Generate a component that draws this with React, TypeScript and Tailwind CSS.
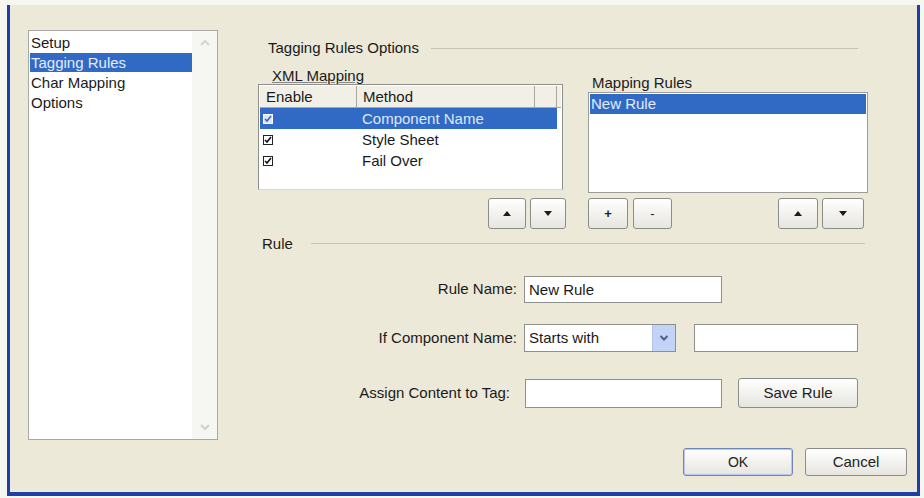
import React from "react";

const font = { fontFamily: '"Liberation Sans", Arial, sans-serif' };

function Btn({ w, h, children, primary }: { w: string; h: string; children: React.ReactNode; primary?: boolean }) {
  return (
    <div
      className={`${w} ${h} flex items-center justify-center rounded-[3px] border ${
        primary ? "border-[#6f86b8] shadow-[inset_0_0_0_1px_#b9c9ee]" : "border-[#8c8c88]"
      } bg-gradient-to-b from-white to-[#e6e5df] text-[#222]`}
    >
      {children}
    </div>
  );
}

function Up() {
  return <div className="w-0 h-0 border-l-[4px] border-r-[4px] border-b-[5px] border-l-transparent border-r-transparent border-b-[#1c1c1c]" />;
}
function Down() {
  return <div className="w-0 h-0 border-l-[4px] border-r-[4px] border-t-[5px] border-l-transparent border-r-transparent border-t-[#1c1c1c]" />;
}

function Check({ sel }: { sel?: boolean }) {
  return (
    <div className={`w-[10px] h-[10px] border ${sel ? "border-white bg-[#dfe7f7]" : "border-[#222] bg-white"} flex items-center justify-center`}>
      <svg width="8" height="8" viewBox="0 0 8 8">
        <path d="M1 4 L3 6 L7 1" stroke={sel ? "#316ac5" : "#111"} strokeWidth="1.6" fill="none" />
      </svg>
    </div>
  );
}

export default function App() {
  const rows = [
    { name: "Component Name", sel: true },
    { name: "Style Sheet" },
    { name: "Fail Over" },
  ];
  return (
    <div className="w-[924px] h-[498px] bg-[#f7f7f2] overflow-hidden text-[15px] text-[#1a1a1a]" style={font}>
      <div className="ml-[7px] mt-[5px] w-[913px] bg-[#ece9d8] border-l-[3px] border-r-[3px] border-b-[4px] border-[#1f3fa8]">
        <div className="flex items-start">
          {/* left nav list */}
          <div className="ml-[18px] mt-[25px] w-[190px] h-[410px] bg-white border border-[#a9a9a4] flex">
            <div className="flex-1 pt-[2px] pl-[1px]">
              <div className="h-[20px] leading-[20px] pl-[1px]">Setup</div>
              <div className="h-[19px] leading-[19px] pl-[1px] bg-[#316ac5] text-[#e4ecfa]">Tagging Rules</div>
              <div className="h-[21px] leading-[21px] pl-[1px]">Char Mapping</div>
              <div className="h-[20px] leading-[20px] pl-[1px]">Options</div>
            </div>
            <div className="w-[25px] h-full bg-[#f6f6f3] flex flex-col items-center justify-between py-[8px]">
              <svg width="12" height="8" viewBox="0 0 12 8"><path d="M2 6 L6 2 L10 6" stroke="#d4d4d0" strokeWidth="2" fill="none" /></svg>
              <svg width="12" height="8" viewBox="0 0 12 8"><path d="M2 2 L6 6 L10 2" stroke="#cfcfcb" strokeWidth="2" fill="none" /></svg>
            </div>
          </div>

          {/* right panel */}
          <div className="ml-[40px] w-[610px]">
            <div className="mt-[34px] flex items-center h-[18px]">
              <span className="pl-[10px] leading-[18px]">Tagging Rules Options</span>
              <div className="flex-1 ml-[12px] mr-[10px] h-px bg-[#c5c3b6]" />
            </div>

            <div className="flex">
              {/* XML mapping */}
              <div className="w-[308px]">
                <div className="mt-[10px] pl-[14px] h-[17px] leading-[17px] underline decoration-[#888]">XML Mapping</div>
                <div className="h-[106px] w-[305px] bg-white border border-[#8e8e8a] border-b-[#d8d8d2] p-[1px]">
                  <div className="flex h-[22px] bg-[#f1efe6] border-b border-[#a8a79c] leading-[21px]">
                    <div className="w-[97px] pl-[6px] border-r border-[#a8a79c]">Enable</div>
                    <div className="w-[178px] pl-[6px] border-r border-[#a8a79c]">Method</div>
                    <div className="w-[22px] border-r border-[#a8a79c]" />
                  </div>
                  {rows.map((r) => (
                    <div key={r.name} className={`flex items-center h-[21px] w-[297px] ${r.sel ? "bg-[#316ac5] text-[#dfe8fa]" : ""}`}>
                      <div className="w-[97px] pl-[3px]"><Check sel={r.sel} /></div>
                      <div className="pl-[5px] leading-[21px]">{r.name}</div>
                    </div>
                  ))}
                </div>
                <div className="mt-[8px] flex justify-end gap-[4px]">
                  <Btn w="w-[38px]" h="h-[31px]"><Up /></Btn>
                  <Btn w="w-[36px]" h="h-[31px]"><Down /></Btn>
                </div>
              </div>

              {/* Mapping rules */}
              <div className="ml-[22px] w-[280px]">
                <div className="mt-[17px] pl-[4px] h-[18px] leading-[18px]">Mapping Rules</div>
                <div className="h-[101px] bg-white border border-[#9c9c98] p-px">
                  <div className="h-[20px] leading-[20px] pl-[1px] bg-[#316ac5] text-[#e4ecfa]">New Rule</div>
                </div>
                <div className="mt-[5px] pr-[4px] flex justify-between">
                  <div className="flex gap-[5px]">
                    <Btn w="w-[40px]" h="h-[31px]"><span className="text-[13px] font-bold leading-none">+</span></Btn>
                    <Btn w="w-[39px]" h="h-[31px]"><span className="text-[13px] leading-none">-</span></Btn>
                  </div>
                  <div className="flex gap-[4px]">
                    <Btn w="w-[40px]" h="h-[31px]"><Up /></Btn>
                    <Btn w="w-[42px]" h="h-[31px]"><Down /></Btn>
                  </div>
                </div>
              </div>
            </div>

            {/* Rule section */}
            <div className="mt-[6px] flex items-center h-[17px]">
              <span className="pl-[4px] leading-[17px]">Rule</span>
              <div className="flex-1 ml-[18px] mr-[3px] h-px bg-[#c5c3b6]" />
            </div>

            <div className="mt-[24px] flex items-center">
              <div className="w-[259px] text-right">Rule Name:</div>
              <div className="ml-[7px] w-[198px] h-[27px] bg-white border border-[#8f8f8b] pl-[4px] leading-[25px]">New Rule</div>
            </div>

            <div className="mt-[21px] flex items-center">
              <div className="w-[259px] text-right">If Component Name:</div>
              <div className="ml-[7px] w-[152px] h-[28px] bg-white border border-[#8f8f8b] flex">
                <div className="flex-1 pl-[4px] leading-[26px]">Starts with</div>
                <div className="w-[23px] h-full bg-[#c3d3f6] border-l border-[#b3c3e6] flex items-center justify-center">
                  <svg width="10" height="8" viewBox="0 0 10 8"><path d="M1.5 2 L5 5.5 L8.5 2" stroke="#4a5f8c" strokeWidth="2" fill="none" /></svg>
                </div>
              </div>
              <div className="ml-[18px] w-[164px] h-[28px] bg-white border border-[#8f8f8b]" />
            </div>

            <div className="mt-[26px] flex items-center">
              <div className="w-[252px] text-right">Assign Content to Tag:</div>
              <div className="ml-[15px] w-[197px] h-[29px] bg-white border border-[#8f8f8b]" />
              <div className="ml-[16px]">
                <Btn w="w-[120px]" h="h-[30px]">Save Rule</Btn>
              </div>
            </div>
          </div>
        </div>

        <div className="mt-[8px] pb-[16px] pr-[10px] flex justify-end gap-[12px]">
          <Btn w="w-[110px]" h="h-[28px]" primary><span className="text-[14px]">OK</span></Btn>
          <Btn w="w-[102px]" h="h-[28px]">Cancel</Btn>
        </div>
      </div>
    </div>
  );
}
